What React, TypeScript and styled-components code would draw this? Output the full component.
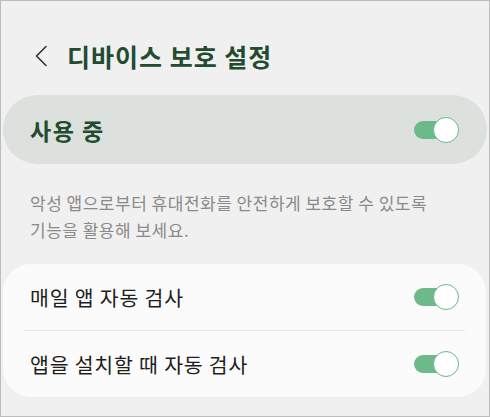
import styled, { createGlobalStyle } from "styled-components";

const GlobalStyle = createGlobalStyle`
  html, body {
    margin: 0;
    padding: 0;
    background: #f0f0f0;
  }
  * {
    box-sizing: border-box;
  }
`;

const Toggle = ({ on = true }: { on?: boolean }) => {
  return (
    <Switch $on={on}>
      <span className="knob" />
    </Switch>
  );
};

const App = () => {
  return (
    <Screen>
      <GlobalStyle />
      <Header>
        <BackButton aria-label="back">
          <svg width="14" height="22" viewBox="0 0 14 22" fill="none">
            <path d="M12 1.5L2.5 11L12 20.5" stroke="#333333" strokeWidth="1.6" strokeLinecap="round" strokeLinejoin="round" />
          </svg>
        </BackButton>
        <Title>디바이스 보호 설정</Title>
      </Header>

      <MasterRow>
        <span>사용 중</span>
        <Toggle />
      </MasterRow>

      <Description>
        악성 앱으로부터 휴대전화를 안전하게 보호할 수 있도록
        <br />
        기능을 활용해 보세요.
      </Description>

      <Card>
        <Row>
          <span>매일 앱 자동 검사</span>
          <Toggle />
        </Row>
        <Divider />
        <Row>
          <span>앱을 설치할 때 자동 검사</span>
          <Toggle />
        </Row>
      </Card>
    </Screen>
  );
};

export default App;

const Screen = styled.div`
  width: 490px;
  height: 417px;
  border: 1px solid #bcbcbc;
  background: #f0f0f0;
  padding: 0 2px 0 2px;
  display: flex;
  flex-direction: column;
  font-family: "Noto Sans CJK KR", "Noto Sans", sans-serif;
  overflow: hidden;
`;

const Header = styled.div`
  display: flex;
  align-items: center;
  height: 40px;
  margin-top: 35px;
  margin-bottom: 19px;
  padding-left: 31px;
  gap: 19px;
`;

const BackButton = styled.button`
  border: none;
  background: none;
  padding: 0;
  display: flex;
  align-items: center;
  cursor: pointer;
`;

const Title = styled.h1`
  margin: 0;
  font-size: 25px;
  font-weight: 700;
  color: #224b2f;
  letter-spacing: 1px;
`;

const MasterRow = styled.div`
  height: 69px;
  border-radius: 35px;
  background: #dde1dd;
  display: flex;
  align-items: center;
  justify-content: space-between;
  padding: 0 29px 0 27px;

  span {
    font-size: 23px;
    font-weight: 700;
    color: #224b2f;
    letter-spacing: 1.5px;
  }
`;

const Description = styled.p`
  margin: 0;
  padding: 25px 10px 21px 27px;
  font-size: 17px;
  line-height: 27px;
  letter-spacing: 0.5px;
  color: #8a8a8a;
`;

const Card = styled.div`
  background: #fbfbfb;
  border-radius: 28px;
  margin-right: 1px;
  display: flex;
  flex-direction: column;
`;

const Row = styled.div`
  height: 66px;
  display: flex;
  align-items: center;
  justify-content: space-between;
  padding: 0 28px 0 27px;

  span {
    font-size: 20.5px;
    letter-spacing: 0.8px;
    color: #1e1e1e;
  }
`;

const Divider = styled.div`
  height: 1px;
  background: #e6e6e6;
  margin: 0 21px;
`;

const Switch = styled.div<{ $on: boolean }>`
  position: relative;
  width: 44px;
  height: 18px;
  border-radius: 9px;
  background: ${(p) => (p.$on ? "#6cb98a" : "#b8b8b8")};

  .knob {
    position: absolute;
    top: 50%;
    ${(p) => (p.$on ? "right: -1px;" : "left: -1px;")}
    width: 26px;
    height: 26px;
    margin-top: -13px;
    border-radius: 50%;
    background: #ffffff;
    border: 1.5px solid ${(p) => (p.$on ? "#6cb98a" : "#b8b8b8")};
  }
`;
